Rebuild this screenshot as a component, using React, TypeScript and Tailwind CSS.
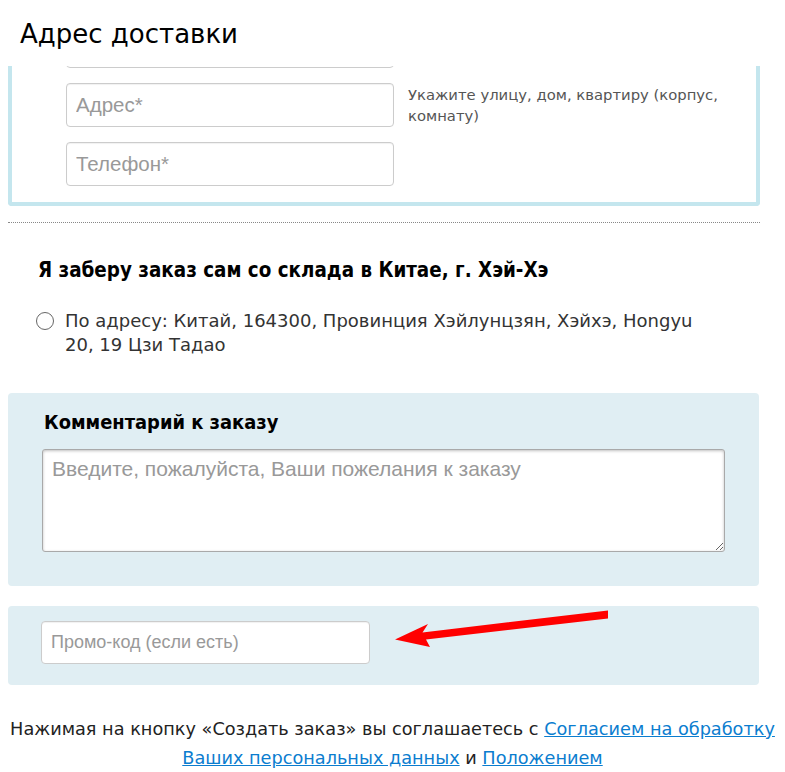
import React from "react";

const body = "font-['DejaVu_Sans','Liberation_Sans',sans-serif]";
const field = "font-['Liberation_Sans',Arial,sans-serif]";

const TextInput = ({ placeholder, className }: { placeholder: string; className: string }) => (
  <input
    type="text"
    placeholder={placeholder}
    className={`${field} ${className} shrink-0 rounded border border-[#cccccc] bg-white px-[9px] text-[#333] outline-none shadow-[inset_0_1px_1px_rgba(0,0,0,0.06)] placeholder:text-[#999]`}
  />
);

const App = () => {
  return (
    <div className={`${body} w-[785px] min-h-[772px] bg-white text-[#333]`}>
      {/* Header */}
      <div className="h-[66px] pl-[20px] pt-[16px] text-[26px] leading-[36px] text-black">
        Адрес доставки
      </div>

      {/* Address box, scrolled so its top is cut off */}
      <div className="mx-2 flex h-[140px] w-[752px] flex-col justify-end gap-[15px] overflow-hidden rounded-b border-x-4 border-b-4 border-[#c4e6ee] pb-[16px] pl-[54px]">
        <div className="flex">
          <TextInput placeholder="Город*" className="h-[44px] w-[328px] text-[20.5px]" />
        </div>
        <div className="flex items-start">
          <TextInput placeholder="Адрес*" className="h-[44px] w-[328px] text-[20.5px]" />
          <p className="ml-[14px] pt-[1px] text-[14.8px] leading-[21px] text-[#555]">
            Укажите улицу, дом, квартиру (корпус,
            <br />
            комнату)
          </p>
        </div>
        <div className="flex">
          <TextInput placeholder="Телефон*" className="h-[44px] w-[328px] text-[20.5px]" />
        </div>
      </div>

      <div className="mx-2 mt-[16px] w-[752px] border-t border-dotted border-[#888]" />

      {/* Pickup */}
      <h3 className="mt-[34px] pl-[38px] font-['DejaVu_Sans_Condensed','DejaVu_Sans',sans-serif] text-[20.4px] font-bold leading-[26px] text-black">
        Я заберу заказ сам со склада в Китае, г. Хэй-Хэ
      </h3>
      <label className="mt-[26px] flex items-start pl-[36px]">
        <span className="mt-[3px] h-[18px] w-[18px] shrink-0 rounded-full border-[1.5px] border-[#666] bg-white" />
        <span className="ml-[11px] text-[18px] leading-[24px] text-[#333]">
          По адресу: Китай, 164300, Провинция Хэйлунцзян, Хэйхэ, Hongyu
          <br />
          20, 19 Цзи Тадао
        </span>
      </label>

      {/* Comment */}
      <section className="mx-2 mt-[36px] h-[193px] w-[751px] rounded bg-[#e0eef3] pl-[34px] pt-[17px]">
        <h3 className="pl-[2px] font-['DejaVu_Sans_Condensed','DejaVu_Sans',sans-serif] text-[19.9px] font-bold leading-[26px] text-black">
          Комментарий к заказу
        </h3>
        <textarea
          placeholder="Введите, пожалуйста, Ваши пожелания к заказу"
          className={`${field} mt-[13px] block h-[103px] w-[683px] rounded-[3px] border border-[#a9a9a9] bg-white px-[9px] py-[6px] text-[21px] leading-[26px] outline-none shadow-[inset_0_1px_3px_rgba(0,0,0,0.25)] placeholder:text-[#999]`}
        />
      </section>

      {/* Promo */}
      <section className="relative mx-2 mt-[20px] h-[79px] w-[751px] rounded bg-[#e0eef3] pl-[33px] pt-[15px]">
        <TextInput placeholder="Промо-код (если есть)" className="h-[43px] w-[329px] text-[18px]" />
        <svg className="absolute left-0 top-0" width="751" height="79" viewBox="0 0 751 79">
          <polygon
            points="387,33.5 420,18 414.5,26.5 600,4.5 600,12.5 418,33.5 422,41"
            fill="#ff0000"
          />
        </svg>
      </section>

      {/* Agreement */}
      <p className="mt-[30px] text-center text-[17.7px] leading-[29px] text-[#222]">
        Нажимая на кнопку «Создать заказ» вы соглашаетесь с{" "}
        <a href="#" className="text-[#0b7dcf] underline">
          Согласием на обработку Ваших персональных данных
        </a>{" "}
        и{" "}
        <a href="#" className="text-[#0b7dcf] underline">
          Положением
        </a>
      </p>
    </div>
  );
};

export default App;
